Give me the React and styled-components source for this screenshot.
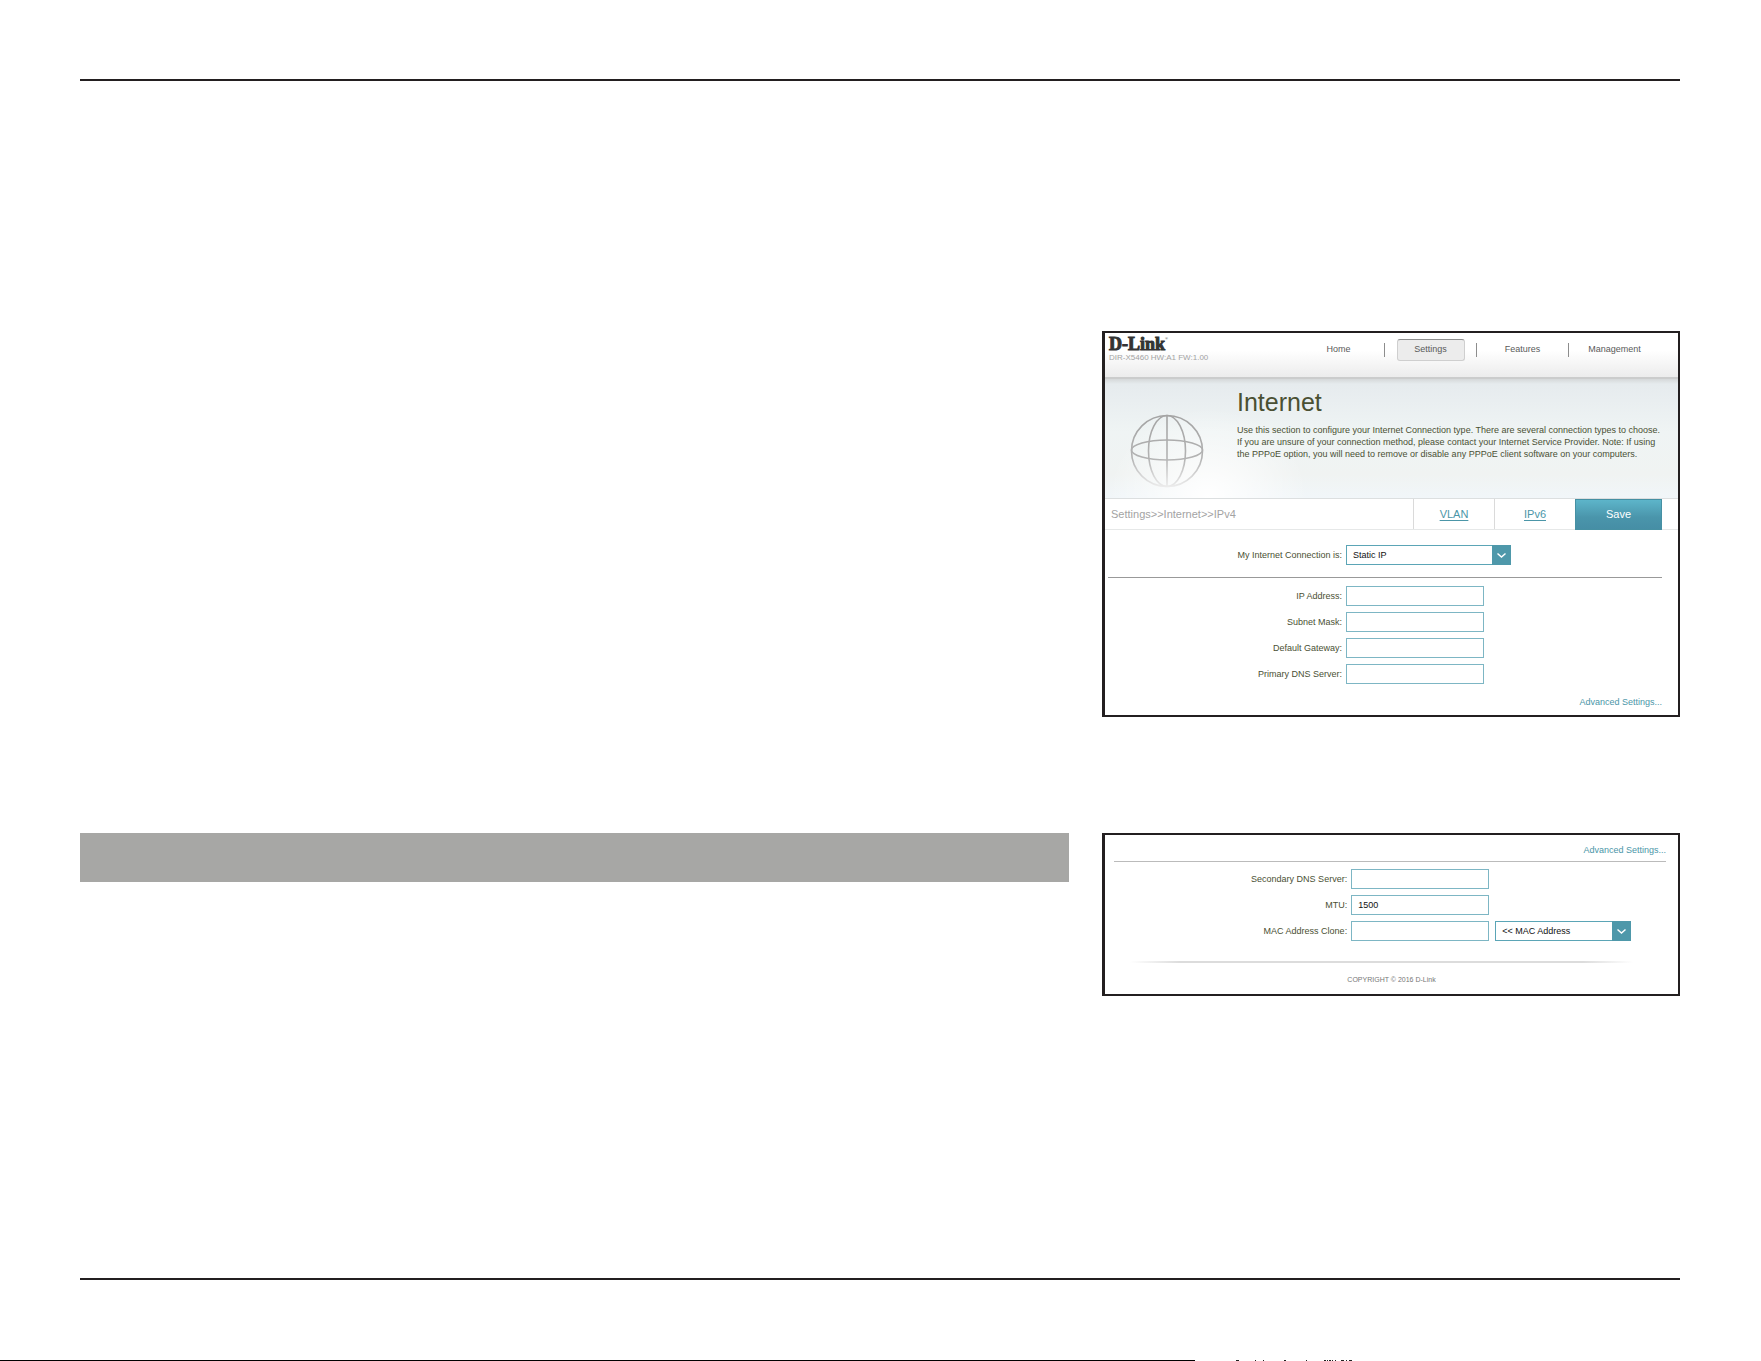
import React, { useState } from "react";
import styled, { createGlobalStyle } from "styled-components";

const GlobalStyle = createGlobalStyle`
  * {
    box-sizing: border-box;
  }
  body {
    margin: 0;
    background: #fff;
    font-family: "Liberation Sans", Arial, sans-serif;
    font-size: 9px;
    color: #4a5033;
  }
`;

const Page = styled.div`
  min-height: 100vh;
  display: flex;
  flex-direction: column;
`;

const Sheet = styled.main`
  margin: 79px 81px 0 80px;
  padding: 250px 0 282px;
  border-top: 2px solid #231f20;
  border-bottom: 2px solid #231f20;
  display: grid;
  grid-template-columns: 989fr 578fr;
  column-gap: 33px;
  row-gap: 116px;
  align-items: start;
`;

const HeadingBar = styled.div`
  height: 49px;
  background: #a7a7a5;
`;

const Panel = styled.section`
  grid-column: 2;
  min-width: 0;
  border: 2px solid #231f20;
  border-left-width: 3px;
`;

const Header = styled.header`
  display: flex;
  justify-content: space-between;
  height: 46px;
  padding: 4px 18px 0 4px;
  border-bottom: 2px solid #cbcccc;
  background: linear-gradient(#fff 40%, #ececec);
`;

const Logo = styled.div`
  display: flex;
  font-family: "Liberation Serif", "Times New Roman", serif;
  font-size: 18px;
  font-weight: bold;
  line-height: 14px;
  color: #333;
  -webkit-text-stroke: 1px #333;

  sup {
    font-size: 4px;
    line-height: 4px;
    font-weight: normal;
    -webkit-text-stroke: 0;
  }
`;

const Model = styled.div`
  font-size: 8px;
  line-height: 10px;
  margin-top: 2px;
  color: #a3a3a3;
`;

const Nav = styled.nav`
  display: flex;
  align-items: center;
  height: 26px;
`;

const NavItem = styled.div`
  width: 92px;
  height: 14px;
  display: flex;
  align-items: center;
  justify-content: center;
  border-left: 1px solid #8d8d8d;

  &:first-child {
    border-left-color: transparent;
  }
`;

const NavLink = styled.a`
  width: 68px;
  height: 22px;
  flex: none;
  line-height: 18px;
  text-align: center;
  text-decoration: none;
  color: #5a5a5a;
  border: 1px solid transparent;
  border-radius: 3px;
  ${(p) =>
    p.$active &&
    `
    background: #ececec;
    border-color: #8f8f8f #cfcfcf #cfcfcf;
  `}
`;

const Banner = styled.div`
  display: flex;
  height: 120px;
  padding: 0 12px 0 25px;
  border-bottom: 1px solid #dcdfe0;
  background: radial-gradient(ellipse 100px 90px at 18% 100%, #fff, rgba(255, 255, 255, 0)),
    linear-gradient(#d5d8d9, #e6ebee 5px, #eff4f4 45%, #f0f3f2 80%, #f1f6f9);
`;

const Globe = styled.svg`
  width: 74px;
  height: 74px;
  flex: none;
  margin-top: 35px;
  fill: none;
  stroke: url(#fade);
  stroke-width: 1.6;
`;

const Intro = styled.div`
  margin-left: 33px;
  padding-top: 9px;

  h1 {
    margin: 0;
    font-size: 25px;
    line-height: 28px;
    font-weight: normal;
  }
  p {
    margin: 8px 0 0;
    line-height: 12px;
  }
`;

const Toolbar = styled.div`
  display: flex;
  height: 31px;
  padding: 0 16px 0 6px;
  border-bottom: 1px solid #e6e8e8;
  font-size: 11px;
  line-height: 30px;
`;

const Crumbs = styled.div`
  flex: 1;
  color: #a3a3a3;
`;

const Tab = styled.a`
  width: 81px;
  text-align: center;
  color: #4b96a8;
  text-underline-offset: 2px;
  border-left: 1px solid #dadada;
`;

const SaveButton = styled.button`
  width: 87px;
  height: 31px;
  padding: 0;
  border: 1px solid #4690a3;
  background: linear-gradient(#5db5ca, #4a95ab 60%, #468ea5);
  color: #fff;
  font: inherit;
  line-height: 29px;
`;

const Rows = styled.div`
  display: grid;
  row-gap: 6px;
  padding: ${(p) => p.$pad};
`;

const Row = styled.div`
  display: grid;
  grid-template-columns: 234fr 316fr;
  column-gap: 4px;
  align-items: center;

  label {
    text-align: right;
    white-space: nowrap;
  }
`;

const Fields = styled.div`
  display: flex;
  gap: 6px;
`;

const TextBox = styled.input`
  width: 138px;
  height: 20px;
  padding: 0 6px;
  border: 1px solid #7db6c4;
  border-radius: 0;
  background: #fff;
  font: inherit;
  color: #111;
`;

const SelectWrap = styled.div`
  position: relative;
  width: ${(p) => p.$width};
  height: 20px;

  select {
    appearance: none;
    width: 100%;
    height: 20px;
    padding: 0 24px 0 6px;
    border: 1px solid #5ba5b6;
    border-radius: 0;
    background: #fff;
    font: inherit;
    color: #111;
  }
  svg {
    position: absolute;
    top: 0;
    right: 0;
    width: 19px;
    height: 20px;
    background: #4e98aa;
    pointer-events: none;
  }
`;

const Rule = styled.hr`
  height: 1px;
  margin: ${(p) => p.$margin};
  border: 0;
  background: ${(p) => p.$color};
`;

const More = styled.div`
  text-align: right;
  line-height: 12px;
  padding: ${(p) => p.$pad};

  a {
    color: #4b96a8;
    text-decoration: none;
  }
`;

const Footer = styled.footer`
  padding-bottom: 7px;
  text-align: center;
  font-size: 7px;
  line-height: 14px;
  color: #777;

  &::before {
    content: "";
    display: block;
    height: 2px;
    margin: 20px 45px 10px 25px;
    background: linear-gradient(90deg, transparent, #dcdcdc 10%, #dcdcdc 90%, transparent);
  }
`;

const Edge = styled.div`
  margin-top: auto;
  height: 1px;
  display: grid;
  grid-template-columns: 1195fr 566fr;

  span {
    background: #000;
  }
  svg {
    display: block;
  }
`;

const menu = ["Home", "Settings", "Features", "Management"];

const addressFields = [
  { id: "ip", label: "IP Address:" },
  { id: "mask", label: "Subnet Mask:" },
  { id: "gateway", label: "Default Gateway:" },
  { id: "dns1", label: "Primary DNS Server:" },
];

function Select({ id, width, options, label }) {
  return (
    <SelectWrap $width={width}>
      <select id={id} aria-label={label}>
        {options.map((o) => (
          <option key={o}>{o}</option>
        ))}
      </select>
      <svg viewBox="0 0 19 20" fill="none" stroke="#fff" strokeWidth="1.5">
        <path d="M5.5 8.5 9.5 12l4-3.5" />
      </svg>
    </SelectWrap>
  );
}

function GlobeIcon() {
  return (
    <Globe viewBox="0 0 74 74">
      <defs>
        <linearGradient id="fade" gradientUnits="userSpaceOnUse" x1="0" y1="0" x2="0" y2="74">
          <stop offset="0" stopColor="#a3a3a3" />
          <stop offset="0.6" stopColor="#b3b3b3" />
          <stop offset="1" stopColor="#eeeeee" />
        </linearGradient>
      </defs>
      <circle cx="37" cy="37" r="35.5" />
      <ellipse cx="37" cy="37" rx="18.5" ry="35.5" />
      <ellipse cx="37" cy="36" rx="35.5" ry="10" />
      <path d="M37 1.5V72.5" />
    </Globe>
  );
}

export default function App() {
  const [values, setValues] = useState({ mtu: "1500" });

  const bind = (id) => ({
    id,
    type: "text",
    value: values[id] || "",
    onChange: (e) => setValues({ ...values, [id]: e.target.value }),
  });

  return (
    <Page>
      <GlobalStyle />
      <Sheet>
        <Panel>
          <Header>
            <div>
              <Logo>
                D-Link<sup>®</sup>
              </Logo>
              <Model>DIR-X5460 HW:A1 FW:1.00</Model>
            </div>
            <Nav>
              {menu.map((m) => (
                <NavItem key={m}>
                  <NavLink href="#" $active={m === "Settings"}>
                    {m}
                  </NavLink>
                </NavItem>
              ))}
            </Nav>
          </Header>
          <Banner>
            <GlobeIcon />
            <Intro>
              <h1>Internet</h1>
              <p>
                Use this section to configure your Internet Connection type. There are several
                connection types to choose. If you are unsure of your connection method, please
                contact your Internet Service Provider. Note: If using the PPPoE option, you will
                need to remove or disable any PPPoE client software on your computers.
              </p>
            </Intro>
          </Banner>
          <Toolbar>
            <Crumbs>Settings&gt;&gt;Internet&gt;&gt;IPv4</Crumbs>
            <Tab href="#">VLAN</Tab>
            <Tab href="#">IPv6</Tab>
            <SaveButton type="button">Save</SaveButton>
          </Toolbar>
          <Rows $pad="15px 16px 12px 3px">
            <Row>
              <label htmlFor="conn">My Internet Connection is:</label>
              <Select id="conn" width="165px" options={["Static IP", "Dynamic IP (DHCP)", "PPPoE"]} />
            </Row>
          </Rows>
          <Rule $margin="0 16px 0 3px" $color="#999" />
          <Rows $pad="8px 16px 0 3px">
            {addressFields.map((f) => (
              <Row key={f.id}>
                <label htmlFor={f.id}>{f.label}</label>
                <TextBox {...bind(f.id)} />
              </Row>
            ))}
          </Rows>
          <More $pad="12px 16px 7px">
            <a href="#">Advanced Settings...</a>
          </More>
        </Panel>

        <HeadingBar />
        <Panel>
          <More $pad="9px 12px 5px">
            <a href="#">Advanced Settings...</a>
          </More>
          <Rule $margin="0 12px 0 9px" $color="#bbb" />
          <Rows $pad="7px 12px 0 9px">
            <Row>
              <label htmlFor="dns2">Secondary DNS Server:</label>
              <TextBox {...bind("dns2")} />
            </Row>
            <Row>
              <label htmlFor="mtu">MTU:</label>
              <TextBox {...bind("mtu")} />
            </Row>
            <Row>
              <label htmlFor="mac">MAC Address Clone:</label>
              <Fields>
                <TextBox {...bind("mac")} />
                <Select id="maclist" width="136px" label="MAC Address" options={["<< MAC Address"]} />
              </Fields>
            </Row>
          </Rows>
          <Footer>COPYRIGHT © 2016 D-Link</Footer>
        </Panel>
      </Sheet>
      <Edge>
        <span />
        <svg width="160" height="1" stroke="#222" strokeWidth="1">
          <path d="M41 .5h3M60 .5h1M68 .5h1M89 .5h2M111 .5h1M129 .5h2M132 .5h1M134 .5h2M137 .5h1M140 .5h1M146 .5h3M151 .5h1M154 .5h3" />
        </svg>
      </Edge>
    </Page>
  );
}
